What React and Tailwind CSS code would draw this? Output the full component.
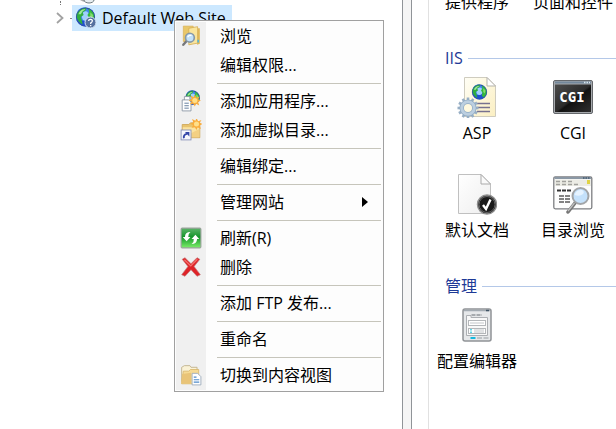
import React from "react";

function GlobeShape({ cx, cy, r }) {
  return (
    <g transform={`translate(${cx} ${cy}) scale(${r / 10})`}>
      <circle r="10" fill="#1f4fd0" />
      <circle cx="-2" cy="-3" r="7" fill="#3f86ea" />
      <ellipse cx="0" cy="-1" rx="4" ry="5" fill="#9fd0fb" />
      <path d="M-9.500 -2 C-8 -8 -3 -10 1 -9.500 L0 -6.500 L-3 -5 L-2 -2 L-5 0 L-4 3 L-3 8 C-7 6 -9.500 2 -9.500 -2Z" fill="#2fae3e" />
      <path d="M3 -9 C8 -7 10 -3 9.500 2 L6 7.500 L3 5 L4 1 L2 -2 L4 -5Z" fill="#35b83c" />
      <path d="M-7.500 -3 C-6 -7 -3 -8.500 0 -8 L-3 -6 L-5 -3Z" fill="#9fe89a" />
      <path d="M5 -5 L8 -2 L7 2 L5 0Z" fill="#83dc6e" />
      <circle r="9.600" fill="none" stroke="#2f4f9c" strokeWidth=".8" />
    </g>
  );
}

function Star({ x, y }) {
  return (
    <g transform={`translate(${x} ${y})`}>
      <path d="M0 -5.500 L1.500 -2.500 L4.500 -3.500 L3 -1 L5.500 0 L3 1.500 L4 4.500 L1 3 L0 5.500 L-1.500 3 L-4.500 3.500 L-3 1 L-5.500 0 L-3 -1.500 L-4 -4.500 L-1 -3Z" fill="#f9ac3c" />
      <circle r="2.300" fill="#ffe08a" />
    </g>
  );
}

function Folder() {
  return (
    <>
      <path d="M2 5 H8 L9.500 3.500 H18 V17 H2Z" fill="#e8c36e" stroke="#cfa75a" strokeWidth=".8" />
      <path d="M2.500 7.500 H17.500 V16.500 H2.500Z" fill="#fbe3a0" />
      <path d="M3 16.500 L17.500 9 V16.500Z" fill="#f3d083" />
    </>
  );
}

function Small({ children }) {
  return (
    <svg aria-hidden="true" viewBox="0 0 20 20" className="size-[22px]">
      {children}
    </svg>
  );
}

const BrowseIcon = () => (
  <Small>
    <path d="M3 1 H12 V15 H3Z" fill="#e9c769" stroke="#d6ae55" strokeWidth=".6" />
    <path d="M8 3 L16 1.500 V16.500 L8 18Z" fill="#fae59c" stroke="#d3ab50" strokeWidth=".7" />
    <path d="M16 3 H18 V17 L15.500 18Z" fill="#dfb859" />
    <path d="M16.500 13.500 V16" stroke="#52b7dd" strokeWidth="1.500" />
    <path d="M6 14.500 L3 18" stroke="#76787b" strokeWidth="2.200" strokeLinecap="round" />
    <circle cx="9" cy="11.500" r="4" fill="#c3e2fa" stroke="#8799a8" strokeWidth="1.500" />
    <path d="M7 11 Q8 9 10.500 9.500" stroke="#fff" strokeWidth="1.200" fill="none" />
  </Small>
);

const AppIcon = () => (
  <Small>
    <GlobeShape cx={11.5} cy={7} r={6.5} />
    <path d="M4 6 H9 V15 H4Z" fill="#fff" stroke="#8d98a5" strokeWidth=".8" />
    <path d="M2 9 H8 L10 11 V19 H2Z" fill="#fff" stroke="#8995a4" strokeWidth=".8" />
    <path d="M4 12 H8 M4 14.300 H8 M4 16.500 H8" stroke="#66809f" strokeWidth=".9" />
    <Star x={13.5} y={9.5} />
  </Small>
);

const VirtualDirIcon = () => (
  <Small>
    <Folder />
    <Star x={15} y={4.5} />
    <rect x="1" y="10" width="9" height="9" fill="#f7f7fc" stroke="#8791b8" strokeWidth=".8" />
    <path d="M3.500 17.500 Q3 14 6.500 13.500" fill="none" stroke="#3446a8" strokeWidth="1.700" />
    <path d="M4.500 11.800 H8.500 V16Z" fill="#3446a8" />
  </Small>
);

const RefreshIcon = () => (
  <Small>
    <defs>
      <linearGradient id="refresh-green" x1="0" y1="0" x2="0" y2="1">
        <stop offset="0" stopColor="#5fb56b" />
        <stop offset=".45" stopColor="#14952a" />
        <stop offset="1" stopColor="#7df06a" />
      </linearGradient>
    </defs>
    <rect x="1" y="1" width="18" height="18" rx="1" fill="url(#refresh-green)" stroke="#9aa39c" />
    <path d="M9.500 4.500 Q4.500 4.500 4.500 9 H2.500 L6 13 L9.500 9 H7.500 Q7 6.500 9.500 4.500Z" fill="#fff" />
    <path d="M10.500 15.500 Q15.500 15.500 15.500 11 H17.500 L14 7 L10.500 11 H12.500 Q13 13.500 10.500 15.500Z" fill="#fff" />
  </Small>
);

const DeleteIcon = () => (
  <Small>
    <path d="M2 3 L4.500 1.500 L10 7 L15.500 1.500 L18 3 L12.800 9.500 L18.500 17 L15.500 18.500 L10 12.500 L4.500 18.500 L1.500 17 L7.200 9.500Z" fill="#de2328" stroke="#c07a7a" strokeWidth=".6" />
    <path d="M4 3.500 L9.800 9 L15.800 3" fill="none" stroke="#f4706b" strokeWidth="1.200" />
  </Small>
);

const ContentViewIcon = () => (
  <Small>
    <path d="M1.500 3 L4 1.500 H9 L10 3 H15.500 V16 H1.500Z" fill="#faf2d6" stroke="#bfb08c" strokeWidth=".8" />
    <path d="M3 6.500 H8 L9.500 5 H17 V18 H1.500Z" fill="#f6da94" stroke="#d6b368" strokeWidth=".7" />
    <path d="M2 9 L1 18 H10 V8Z" fill="#e9c478" />
    <path d="M11 8.500 H16 L19 11.500 V19 H11Z" fill="#fff" stroke="#9aa8ba" strokeWidth=".8" />
    <path d="M12.500 12 H15 M12.500 14.300 H17.500 M12.500 16.500 H17.500" stroke="#4f8ac9" strokeWidth="1.100" />
  </Small>
);

function SiteIcon() {
  return (
    <svg aria-hidden="true" viewBox="0 0 22 22" className="size-[22px] shrink-0">
      <GlobeShape cx={10.5} cy={10} r={9.5} />
      <circle cx="15.500" cy="15.500" r="5.500" fill="#55719f" stroke="#dbe9f6" />
      <path d="M13.600 14 Q13.700 12.200 15.600 12.300 Q17.600 12.500 17.300 14.200 Q17 15.300 15.700 16 V17 M15.700 18 V19.200" fill="none" stroke="#fff" strokeWidth="1.300" />
    </svg>
  );
}

const gearTeeth = [0, 30, 60, 90, 120, 150, 180, 210, 240, 270, 300, 330];

const AspIcon = () => (
  <svg aria-hidden="true" viewBox="0 0 40 42" className="h-[42px] w-10">
    <defs>
      <linearGradient id="asp-page" x1="0" y1="0" x2="1" y2="1">
        <stop offset="0" stopColor="#fffef5" />
        <stop offset="1" stopColor="#fbefc2" />
      </linearGradient>
    </defs>
    <path d="M7.500 1.500 H30 L38.500 10 V40.500 H7.500Z" fill="url(#asp-page)" stroke="#cfccbf" />
    <path d="M30 1.500 V10 H38.500Z" fill="#fff" stroke="#b4b3ad" />
    <GlobeShape cx={22.5} cy={16} r={7.5} />
    <path d="M20 27.500 H33 M20 31.500 H33 M20 35.500 H33" stroke="#77718f" strokeWidth="1.300" />
    <g transform="translate(11 32)">
      {gearTeeth.map((a) => (
        <rect key={a} x="-1.300" y="-10.500" width="2.600" height="4" fill="#98afc5" transform={`rotate(${a})`} />
      ))}
      <circle r="6.300" fill="#fff9df" stroke="#8fa9c2" strokeWidth="4.500" />
      <circle r="6.300" fill="none" stroke="#bccfe0" strokeWidth="3" />
    </g>
  </svg>
);

const CgiIcon = () => (
  <svg aria-hidden="true" viewBox="0 0 40 34" className="h-[34px] w-10">
    <defs>
      <linearGradient id="cgi-screen" x1="0" y1="0" x2="1" y2="1">
        <stop offset="0" stopColor="#4c4c4c" />
        <stop offset=".5" stopColor="#2b2b2b" />
        <stop offset=".55" stopColor="#111" />
        <stop offset="1" stopColor="#303030" />
      </linearGradient>
    </defs>
    <rect x=".5" y=".5" width="39" height="33" rx="1.500" fill="#a6a9ad" stroke="#65686c" />
    <path d="M2 2.500 H38" stroke="#72879b" strokeWidth="2" />
    <path d="M31 2.500 H37" stroke="#d7e6ef" strokeWidth="1.500" strokeDasharray="1.500 1" />
    <rect x="2" y="4.500" width="36" height="27.500" fill="url(#cgi-screen)" />
    <text x="19" y="22" textAnchor="middle" fill="#fff" className="font-['DejaVu_Sans_Mono'] text-[14px] font-bold">CGI</text>
  </svg>
);

const DocumentIcon = () => (
  <svg aria-hidden="true" viewBox="0 0 40 42" className="h-[42px] w-10">
    <defs>
      <linearGradient id="doc-page" x1="0" y1="0" x2="1" y2="1">
        <stop offset="0" stopColor="#fff" />
        <stop offset="1" stopColor="#eee" />
      </linearGradient>
    </defs>
    <path d="M1.500 1.500 H24 L33.500 11 V40.500 H1.500Z" fill="url(#doc-page)" stroke="#c0c0c0" />
    <path d="M24 1.500 V11 H33.500Z" fill="#fafafa" stroke="#aaa" />
    <circle cx="30" cy="31.500" r="9.500" fill="#191919" stroke="#8e8e8e" strokeWidth="1.500" />
    <circle cx="30" cy="31.500" r="8" fill="none" stroke="#666" />
    <path d="M26 32 L29 36 L33.500 26.500" fill="none" stroke="#fff" strokeWidth="2.400" />
  </svg>
);

const DirectoryIcon = () => (
  <svg aria-hidden="true" viewBox="0 0 40 40" className="size-10">
    <rect x=".8" y="2.800" width="38" height="32" rx="1.500" fill="#fdfdfd" stroke="#7c7e81" strokeWidth="1.300" />
    <path d="M1.500 4 H38" stroke="#8b98a5" strokeWidth="2" />
    <path d="M30 4 H37" stroke="#435970" strokeWidth="1.500" strokeDasharray="1.500 1" />
    <path d="M2 5.500 H38 V12 H2Z" fill="#ecece5" />
    <path d="M3 7.500 H20 M3 10.500 H26" stroke="#a1a19d" strokeWidth="1.300" strokeDasharray="4 2" />
    <rect x="34" y="6" width="3" height="4" fill="#e0d344" />
    <path d="M4 16.500 H19" stroke="#333" strokeWidth="1.800" strokeDasharray="4 1" />
    <path d="M6 22 H17 M6 25 H17 M6 28 H17" stroke="#595959" strokeWidth="1.300" strokeDasharray="5 1" />
    <path d="M22 29 L15 38" stroke="#777" strokeWidth="3.500" strokeLinecap="round" />
    <path d="M21.500 29 L15 37" stroke="#c1c1c1" strokeWidth="1.200" />
    <circle cx="27.500" cy="22" r="8" fill="#c4e1fb" stroke="#a2a5a8" strokeWidth="2" />
    <path d="M21.500 21 Q23 15.500 29 16 Q32 18 30 20 Q27 23 21.500 21Z" fill="#e6f3ff" />
  </svg>
);

const ConfigIcon = () => (
  <svg aria-hidden="true" viewBox="0 0 30 34" className="h-[34px] w-[30px]">
    <rect x="1" y="1" width="28" height="32" rx="2" fill="#e6e8ea" stroke="#909397" strokeWidth="1.500" />
    <path d="M2 2.500 H28" stroke="#a3abb2" strokeWidth="1.500" />
    <path d="M24 2.500 H27" stroke="#405465" strokeWidth="1.500" />
    <path d="M4.500 7.500 H9 V9.500 H25.500 V27.500 H4.500Z" fill="#f8f8f8" stroke="#acafb3" />
    <path d="M9.500 7 H20" stroke="#a6aaae" strokeWidth="1.800" strokeDasharray="4 1" />
    <rect x="6.500" y="12.500" width="17" height="5" fill="#fff" stroke="#b4b7ba" />
    <rect x="6.500" y="20.500" width="17" height="5" fill="#fff" stroke="#b4b7ba" />
    <path d="M8 15 H22 M12 22 H22 M12 24 H22" stroke="#c3c6c9" />
    <path d="M9 21 V25" stroke="#61d5e7" strokeWidth="2" strokeDasharray="1.500 1" />
    <path d="M8.500 30 H13.500" stroke="#16b9df" strokeWidth="2" />
    <path d="M15 30 H20 M21.500 30 H26.500" stroke="#bfc3c6" strokeWidth="2" />
  </svg>
);

const menuGroups = [
  [{ label: "浏览", icon: BrowseIcon }, { label: "编辑权限..." }],
  [{ label: "添加应用程序...", icon: AppIcon }, { label: "添加虚拟目录...", icon: VirtualDirIcon }],
  [{ label: "编辑绑定..." }],
  [{ label: "管理网站", submenu: true }],
  [{ label: "刷新(R)", icon: RefreshIcon }, { label: "删除", icon: DeleteIcon }],
  [{ label: "添加 FTP 发布..." }],
  [{ label: "重命名" }],
  [{ label: "切换到内容视图", icon: ContentViewIcon }],
];

function MenuItem({ label, icon: Icon, submenu }) {
  return (
    <button type="button" role="menuitem" aria-haspopup={submenu ? "menu" : undefined} className="flex h-[29px] w-full items-center pb-[2px] text-left">
      <span className="flex h-full w-[30px] shrink-0 items-center justify-center">{Icon && <Icon />}</span>
      <span className="ml-[14px] flex-1 whitespace-nowrap">{label}</span>
      {submenu && (
        <svg aria-hidden="true" viewBox="0 0 6 10" className="mr-[14px] h-[10px] w-[6px]">
          <path d="M0 0 L6 5 L0 10Z" fill="#000" />
        </svg>
      )}
    </button>
  );
}

function ContextMenu() {
  return (
    <div role="menu" className="absolute top-[20px] left-[174px] w-[210px] border border-[#a0a0a0] bg-[#fdfdfd] p-px">
      <div className="bg-linear-to-r from-[#f0f0f0] from-[30px] to-transparent to-[30px]">
        {menuGroups.map((group, i) => (
          <React.Fragment key={i}>
            {i > 0 && (
              <div role="separator" className="mr-px ml-[41px] h-[7px] pt-[3px]">
                <div className="h-px bg-[#c6c5bb]" />
              </div>
            )}
            {group.map((item) => <MenuItem key={item.label} {...item} />)}
          </React.Fragment>
        ))}
      </div>
    </div>
  );
}

function SiteTree() {
  return (
    <nav aria-label="网站" className="relative w-[402px] shrink-0 bg-white">
      <div className="flex h-[5px] items-end overflow-hidden pl-[60px]">
        <span className="h-[4px] border-l border-dotted border-[#777]" />
        <svg aria-hidden="true" viewBox="0 0 20 5" className="ml-[15px] h-[5px] w-5">
          <path d="M4 0 Q10 4 15 0" fill="#aaa" />
          <ellipse cx="13" cy="0" rx="5" ry="3" fill="#e8eef1" stroke="#6e7b80" />
        </svg>
      </div>
      <div className="flex h-[26px] items-center pl-[56px]">
        <button type="button" aria-label="展开" className="w-[14px]">
          <svg aria-hidden="true" viewBox="0 0 8 12" className="h-3 w-2">
            <path d="M1 1 L6.500 6 L1 11" fill="none" stroke="#a2a2a2" strokeWidth="1.800" />
          </svg>
        </button>
        <span className="w-[2px] border-t border-dotted border-[#888]" />
        <div className="flex h-full items-center gap-[5px] bg-[#cce8ff] pr-[6px] pl-[3px]">
          <SiteIcon />
          <span className="whitespace-nowrap">Default Web Site</span>
        </div>
      </div>
      <ContextMenu />
    </nav>
  );
}

function Feature({ label, icon: Icon }) {
  return (
    <button type="button" className="flex h-[97px] w-24 shrink-0 flex-col items-center pt-[7px]">
      <span className="flex h-10 items-center justify-center"><Icon /></span>
      <span className="mt-1 leading-6 whitespace-nowrap">{label}</span>
    </button>
  );
}

function FeatureGroup({ title, children }) {
  return (
    <section className="mt-[10px]">
      <h2 className="flex h-6 items-center gap-[5px] pl-4 text-[#1e3a96]">
        {title}
        <span className="h-px flex-1 bg-[#b4c8e8]" />
      </h2>
      {children}
    </section>
  );
}

export default function App() {
  return (
    <main className="flex h-screen overflow-hidden bg-white font-['Open_Sans','Noto_Sans_CJK_SC',sans-serif] text-[16px] leading-6 text-black">
      <SiteTree />
      <div className="w-[10px] shrink-0 border-x border-[#909498] bg-[#f5f5f5]" />
      <div className="w-4 shrink-0" />
      <div className="min-w-0 flex-1 overflow-hidden border-l border-[#e1e1e1]">
        <div className="-mt-[10px] flex h-[46px]">
          <button type="button" className="h-6 w-24 shrink-0 whitespace-nowrap">提供程序</button>
          <button type="button" className="h-6 w-24 shrink-0 whitespace-nowrap">页面和控件</button>
        </div>
        <FeatureGroup title="IIS">
          <div className="flex">
            <Feature label="ASP" icon={AspIcon} />
            <Feature label="CGI" icon={CgiIcon} />
          </div>
          <div className="flex">
            <Feature label="默认文档" icon={DocumentIcon} />
            <Feature label="目录浏览" icon={DirectoryIcon} />
          </div>
        </FeatureGroup>
        <FeatureGroup title="管理">
          <div className="flex">
            <Feature label="配置编辑器" icon={ConfigIcon} />
          </div>
        </FeatureGroup>
      </div>
    </main>
  );
}
